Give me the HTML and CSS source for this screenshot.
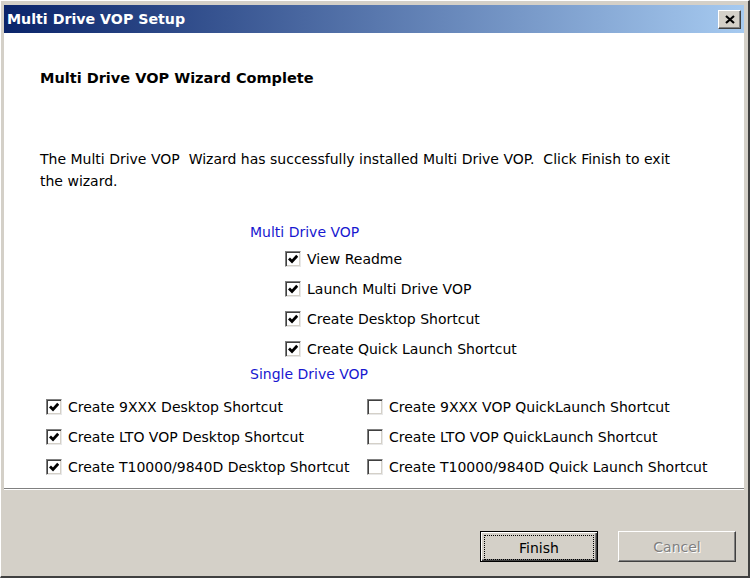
FILE: index.html
```html
<!DOCTYPE html>
<html>
<head>
    <title>Multi Drive VOP Setup</title>
    <link rel="stylesheet" href="styles.css">
</head>
<body>
    <div class="window">
        <header class="titlebar">
            <span class="title">Multi Drive VOP Setup</span>
            <button class="close-btn" aria-label="Close">
                <svg width="10" height="9" viewBox="0 0 10 9">
                    <path d="M1 1 L9 8 M9 1 L1 8" stroke="#000" stroke-width="2.2" />
                </svg>
            </button>
        </header>

        <main class="panel">
            <h1 class="heading">Multi Drive VOP Wizard Complete</h1>
            <p class="message">The Multi Drive VOP&nbsp; Wizard has successfully installed Multi Drive VOP.&nbsp;&nbsp;Click Finish to exit<br>the wizard.</p>

            <section class="group multi">
                <div class="group-label">Multi Drive VOP</div>
                <label class="option"><span class="cb checked"></span>View Readme</label>
                <label class="option"><span class="cb checked"></span>Launch Multi Drive VOP</label>
                <label class="option"><span class="cb checked"></span>Create Desktop Shortcut</label>
                <label class="option"><span class="cb checked"></span>Create Quick Launch Shortcut</label>
                <div class="group-label">Single Drive VOP</div>
            </section>

            <section class="single-grid">
                <label class="option"><span class="cb checked"></span>Create 9XXX Desktop Shortcut</label>
                <label class="option"><span class="cb"></span>Create 9XXX VOP QuickLaunch Shortcut</label>
                <label class="option"><span class="cb checked"></span>Create LTO VOP Desktop Shortcut</label>
                <label class="option"><span class="cb"></span>Create LTO VOP QuickLaunch Shortcut</label>
                <label class="option"><span class="cb checked"></span>Create T10000/9840D Desktop Shortcut</label>
                <label class="option"><span class="cb"></span>Create T10000/9840D Quick Launch Shortcut</label>
            </section>
        </main>

        <footer class="buttons">
            <button class="btn default"><span class="focus">Finish</span></button>
            <button class="btn" disabled>Cancel</button>
        </footer>
    </div>
</body>
</html>
```

FILE: styles.css
```css
body {
    margin: 0;
    padding: 0;
    font-family: "DejaVu Sans", Verdana, sans-serif;
    font-size: 14px;
    color: #000;
    background-color: #d4d0c8;
}

.window {
    width: 750px;
    height: 578px;
    box-sizing: border-box;
    display: flex;
    flex-direction: column;
    background-color: #d4d0c8;
    padding: 4px 4px 0 4px;
    border-left: 1px solid #fff;
    border-top: 1px solid #fff;
    border-right: 2px solid #404040;
    border-bottom: 2px solid #404040;
}

.titlebar {
    height: 28px;
    flex: none;
    display: flex;
    align-items: center;
    justify-content: space-between;
    padding: 0 3px 0 3px;
    margin-left: -1px;
    background: linear-gradient(to right, #0a246a, #a6caf0);
}

.title {
    color: #fff;
    font-weight: bold;
    font-size: 14.2px;
}

.close-btn {
    width: 23px;
    height: 19px;
    padding: 0;
    display: flex;
    align-items: center;
    justify-content: center;
    background-color: #d4d0c8;
    border: 1px solid;
    border-color: #fff #404040 #404040 #fff;
    box-shadow: inset -1px -1px #808080;
}

.panel {
    flex: none;
    height: 456px;
    box-sizing: border-box;
    background-color: #fff;
    margin-left: -1px;
    padding: 36px 0 0 36px;
    border-bottom: 1px solid #808080;
    box-shadow: 0 1px #fff;
}

.heading {
    margin: 0;
    font-size: 14.5px;
    font-weight: bold;
    line-height: 18px;
}

.message {
    margin: 61px 0 0 0;
    line-height: 22px;
}

.group {
    margin: 30px 0 0 210px;
}

.group-label {
    color: #1818d0;
    height: 20px;
    line-height: 20px;
}

.group .group-label:first-child {
    margin-bottom: 2px;
}

.group .option {
    height: 30px;
    margin-left: 35px;
}

.single-grid {
    margin: 8px 0 0 6px;
    display: grid;
    grid-template-columns: 321px auto;
    grid-auto-rows: 30px;
}

.option {
    display: flex;
    align-items: center;
}

.cb {
    width: 14px;
    height: 14px;
    flex: none;
    margin-right: 6px;
    background-color: #fff;
    border: 1px solid;
    border-color: #808080 #e8e8e8 #e8e8e8 #808080;
    box-shadow: inset 1px 1px #404040, inset -1px -1px #d4d0c8;
    background-position: center;
    background-repeat: no-repeat;
}

.cb.checked {
    background-image: url("data:image/svg+xml,%3Csvg xmlns='http://www.w3.org/2000/svg' width='10' height='10' viewBox='0 0 10 10'%3E%3Cpath d='M1 4.5 L4 7.5 L9.2 1.8' fill='none' stroke='%23000' stroke-width='2.8'/%3E%3C/svg%3E");
}

.buttons {
    flex: 1;
    display: flex;
    justify-content: flex-end;
    align-items: flex-start;
    gap: 20px;
    padding: 42px 8px 0 0;
}

.btn {
    width: 118px;
    height: 31px;
    padding: 0;
    font-family: "DejaVu Sans", Verdana, sans-serif;
    font-size: 14px;
    color: #000;
    background-color: #d4d0c8;
    border: 1px solid;
    border-color: #fff #404040 #404040 #fff;
    box-shadow: inset -1px -1px #808080;
}

.btn.default {
    border: 1px solid #000;
    box-shadow: inset 1px 1px #fff, inset -1px -1px #404040, inset -2px -2px #808080;
}

.btn .focus {
    display: flex;
    align-items: center;
    justify-content: center;
    margin: 3px;
    height: 23px;
    border: 1px dotted #000;
}

.btn:disabled {
    color: #808080;
    text-shadow: 1px 1px #fff;
}
```
